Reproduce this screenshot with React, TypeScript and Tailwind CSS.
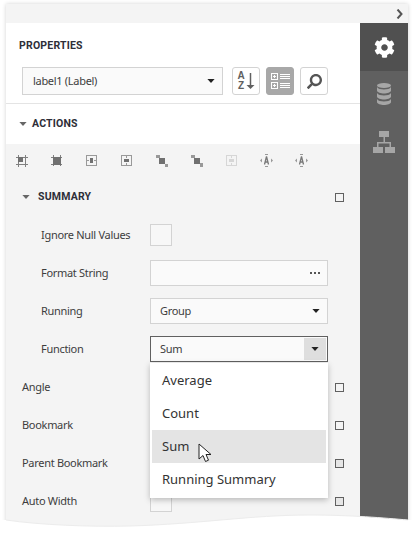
import { FaCog, FaSearch } from "react-icons/fa"

const labelFont = "font-['Noto_Sans',sans-serif] tracking-[-0.3px]"

const Caret = ({ className = "", fill = "#222" }: { className?: string; fill?: string }) => (
  <svg width="8" height="4" viewBox="0 0 9 5" className={className}>
    <path d="M0 0h9L4.500 5z" fill={fill} />
  </svg>
)

const Section = ({ title, className = "" }: { title: string; className?: string }) => (
  <span className={`font-['Roboto',sans-serif] text-[10.5px] font-bold text-[#2e2e38] tracking-[0.2px] ${className}`}>
    {title}
  </span>
)

const Check = ({ fill = "#f4f4f4" }: { fill?: string }) => (
  <div className="w-[9px] h-[9px] border border-[#606060]" style={{ background: fill }} />
)

const CropIcon = ({ solid }: { solid?: boolean }) => (
  <svg width="12" height="12" viewBox="0 0 12 12">
    <path d="M2.500 0v12M9.500 0v12M0 2.500h12M0 9.500h12" stroke="#808080" strokeWidth="1" strokeDasharray={solid ? "2 1" : undefined} fill="none" />
    <rect x={2} y={2} width={solid ? 8 : 5} height={solid ? 8 : 5} fill="#707070" />
  </svg>
)

const CenterIcon = ({ horizontal, light }: { horizontal?: boolean; light?: boolean }) => {
  const c = light ? "#d6d6d6" : "#999"
  return (
    <svg width="11" height="11" viewBox="0 0 11 11">
      <rect x="0.500" y="0.500" width="10" height="10" fill="none" stroke={c} />
      {horizontal ? (
        <>
          <rect x="3" y="4" width="5" height="3" fill={light ? c : "#707070"} />
          <path d="M5.500 1v2M5.500 8v2" stroke={c} />
        </>
      ) : (
        <>
          <rect x="4" y="3" width="3" height="5" fill={light ? c : "#707070"} />
          <path d="M1 5.500h2M8 5.500h2" stroke={c} />
        </>
      )}
    </svg>
  )
}

const LayerIcon = ({ mirrored }: { mirrored?: boolean }) => (
  <svg width="12" height="12" viewBox="0 0 12 12">
    <rect x="0" y="0" width="4" height="3" fill="#999" />
    <rect x="3" y="3" width="6" height="6" fill="#707070" />
    <rect x="9" y={mirrored ? 8 : 9} width="3" height={mirrored ? 4 : 3} fill="#999" />
  </svg>
)

const SpaceIcon = () => (
  <svg width="13" height="13" viewBox="0 0 13 13">
    <path d="M0 6.500l2-2v4zM13 6.500l-2-2v4z" fill="#999" />
    <path d="M5 0.500h3M5 12.500h3" stroke="#999" />
    <path d="M6.500 2.500L4.500 10.500M6.500 2.500l2 8M5 8h3" fill="none" stroke="#777" strokeWidth="1.300" />
  </svg>
)

const Row = ({
  label,
  indent,
  check,
  children,
}: {
  label: string
  indent?: boolean
  check?: string
  children?: React.ReactNode
}) => (
  <div className="flex items-center h-[38px] relative">
    <span className={`text-[11px] text-[#3d3d3d] w-[144px] ${labelFont} ${indent ? "pl-[35px]" : "pl-[16px]"}`}>
      {label}
    </span>
    {children}
    {check && (
      <div className="ml-auto mr-[16px]">
        <Check fill={check} />
      </div>
    )}
  </div>
)

const Field = ({ children, active }: { children?: React.ReactNode; active?: boolean }) => (
  <div
    className={`w-[178px] h-[26px] border bg-[#fafafa] flex items-center justify-between pl-[9px] text-[11px] text-[#3d3d3d] ${labelFont} ${
      active ? "border-[#606060]" : "border-[#d3d3d3]"
    }`}
  >
    {children}
  </div>
)

const Database = () => (
  <svg width="14" height="22" viewBox="0 0 14 22" fill="#a6a6a6">
    <ellipse cx="7" cy="2.500" rx="7" ry="2.500" />
    <path d="M0 4c1 1.800 4 2.500 7 2.500S13 5.800 14 4v3.500C14 9.500 10 10.500 7 10.500S0 9.500 0 7.500z" />
    <path d="M0 10c1 1.800 4 2.500 7 2.500s6-.7 7-2.500v3.500c0 2-4 3-7 3s-7-1-7-3z" />
    <path d="M0 16c1 1.800 4 2.500 7 2.500s6-.7 7-2.500v3c0 2-4 3-7 3s-7-1-7-3z" />
  </svg>
)

const Sitemap = () => (
  <svg width="22" height="22" viewBox="0 0 22 22" fill="#a6a6a6">
    <rect x="6" y="0" width="10" height="6" />
    <rect x="0" y="16" width="10" height="6" />
    <rect x="12" y="16" width="10" height="6" />
    <path d="M10.500 6h1.500v5h6v5h-1.500v-3.500h-11V16H4v-5h6.500z" />
  </svg>
)

const ToolButton = ({ active, children }: { active?: boolean; children: React.ReactNode }) => (
  <div
    className={`w-[28px] h-[28px] rounded-[3px] border flex items-center justify-center ${
      active ? "bg-[#a8a8a8] border-[#a8a8a8]" : "bg-white border-[#d3d3d3]"
    }`}
  >
    {children}
  </div>
)

export default function App() {
  return (
    <div className="relative w-[413px] h-[533px] bg-white overflow-hidden pt-[4px] pl-[6px]">
      <div className="w-[402px] h-[525px] flex flex-col bg-[#f4f4f4] shadow-[0_0_4px_rgba(0,0,0,0.18)]">
        <div className="h-[19px] flex items-center justify-end pr-[5px] shrink-0">
          <svg width="7" height="10" viewBox="0 0 7 10">
            <path d="M1.500 0.500L5.500 5l-4 4.500" fill="none" stroke="#555" strokeWidth="2" />
          </svg>
        </div>
        <div className="flex flex-1 min-h-0">
          <div className="w-[354px] flex flex-col">
            <div className="bg-white h-[121px] shrink-0 flex flex-col">
              <div className="h-[80px] border-b border-[#e4e4e4] box-content">
                <div className="pl-[13px] pt-[14px] leading-[12px]">
                  <Section title="PROPERTIES" />
                </div>
                <div className="flex items-center mt-[15px] pl-[16px]">
                  <div className={`w-[201px] h-[28px] border border-[#d3d3d3] bg-[#fafafa] flex items-center justify-between pl-[10px] pr-[7px] text-[11px] text-[#3d3d3d] ${labelFont}`}>
                    <span>label1 (Label)</span>
                    <Caret />
                  </div>
                  <div className="flex gap-[6px] ml-[9px]">
                    <ToolButton>
                      <div className="flex items-center gap-[1px] text-[#606060]">
                        <div className="flex flex-col font-['Liberation_Sans',sans-serif] text-[10px] font-bold leading-[10px] text-center">
                          <span>A</span>
                          <span>Z</span>
                        </div>
                        <svg width="9" height="17" viewBox="0 0 9 17">
                          <path d="M4.500 0v14" stroke="#606060" strokeWidth="1.500" />
                          <path d="M0.500 12h8l-4 4z" fill="#606060" />
                        </svg>
                      </div>
                    </ToolButton>
                    <ToolButton active>
                      <svg width="19" height="16" viewBox="0 0 19 16">
                        <g stroke="#fff" fill="none">
                          <rect x="0.500" y="0.500" width="6" height="6" />
                          <rect x="0.500" y="9.500" width="6" height="6" />
                          <path d="M2 3.500h3M3.500 2v3M2 12.500h3M3.500 11v3" />
                          <path d="M9 1.500h10M9 3.500h10M9 5.500h10M9 10.500h10M9 12.500h10M9 14.500h10" />
                        </g>
                      </svg>
                    </ToolButton>
                    <ToolButton>
                      <FaSearch size={15} color="#555" className="-scale-x-100" />
                    </ToolButton>
                  </div>
                </div>
              </div>
              <div className="flex items-center h-[40px] pl-[13px] gap-[5px]">
                <Caret fill="#666" />
                <Section title="ACTIONS" />
              </div>
            </div>

            <div className="flex-1 relative min-h-0">
              <div className="grid grid-cols-[repeat(9,35px)] h-[34px] pb-[1px] items-center justify-items-center ml-[-2px]">
                <CropIcon />
                <CropIcon solid />
                <CenterIcon />
                <CenterIcon horizontal />
                <LayerIcon />
                <LayerIcon mirrored />
                <CenterIcon horizontal light />
                <SpaceIcon />
                <SpaceIcon />
              </div>
              <div className="flex items-center h-[38px] pl-[16px]">
                <Caret fill="#666" />
                <Section title="SUMMARY" className="ml-[8px]" />
                <div className="ml-auto mr-[16px]">
                  <Check />
                </div>
              </div>
              <Row label="Ignore Null Values" indent>
                <div className="w-[22px] h-[22px] border border-[#d3d3d3] bg-[#f7f7f7]" />
              </Row>
              <Row label="Format String" indent>
                <Field>
                  <span />
                  <span className="flex gap-[2px] pr-[7px]">
                    <i className="w-[2px] h-[2px] bg-[#555]" />
                    <i className="w-[2px] h-[2px] bg-[#555]" />
                    <i className="w-[2px] h-[2px] bg-[#555]" />
                  </span>
                </Field>
              </Row>
              <Row label="Running" indent>
                <Field>
                  <span>Group</span>
                  <Caret className="mr-[7px]" />
                </Field>
              </Row>
              <Row label="Function" indent>
                <Field active>
                  <span>Sum</span>
                  <div className="w-[22px] h-[22px] mr-[1px] bg-[#dedede] flex items-center justify-center">
                    <Caret />
                  </div>
                </Field>
              </Row>
              <Row label="Angle" check="#f4f4f4" />
              <Row label="Bookmark" check="#f4f4f4" />
              <Row label="Parent Bookmark" check="#e6e6e6" />
              <Row label="Auto Width" check="#e6e6e6">
                <div className="w-[22px] h-[22px] border border-[#d3d3d3] bg-[#f7f7f7]" />
              </Row>

              <div className="absolute left-[144px] top-[219px] w-[178px] h-[135px] bg-white p-[2px] py-[1px] shadow-[0_2px_6px_rgba(0,0,0,0.25)] text-[13px] text-[#333] font-['Noto_Sans',sans-serif]">
                {["Average", "Count", "Sum", "Running Summary"].map((item) => (
                  <div
                    key={item}
                    className={`h-[33px] flex items-center pl-[10px] pt-[1px] ${item === "Sum" ? "bg-[#e4e4e4]" : ""}`}
                  >
                    {item}
                  </div>
                ))}
              </div>
              <svg width="14" height="20" viewBox="0 0 14 20" className="absolute left-[192px] top-[299px]">
                <path d="M1 1v15l4-3.500 2.500 6 3-1.300-2.500-5.700h5z" fill="#fff" stroke="#222" strokeWidth="1" />
              </svg>
            </div>
          </div>

          <div className="w-[48px] bg-[#606060] shrink-0 flex flex-col">
            <div className="h-[48px] bg-[#505050] flex items-center justify-center">
              <FaCog size={21} color="#fff" />
            </div>
            <div className="h-[48px] flex items-center justify-center pb-[2px]">
              <Database />
            </div>
            <div className="h-[48px] flex items-center justify-center pb-[2px]">
              <Sitemap />
            </div>
          </div>
        </div>
      </div>

      <svg width="413" height="25" viewBox="0 508 413 25" className="absolute left-0 bottom-0">
        <path d="M0 520H6C40 525 90 527 130 526C200 524 250 515 310 515C350 515 385 518 408 520H413V533H0Z" fill="#fff" />
        <path d="M6 520C40 525 90 527 130 526C200 524 250 515 310 515C350 515 385 518 408 520" fill="none" stroke="#ececec" />
      </svg>
    </div>
  )
}
